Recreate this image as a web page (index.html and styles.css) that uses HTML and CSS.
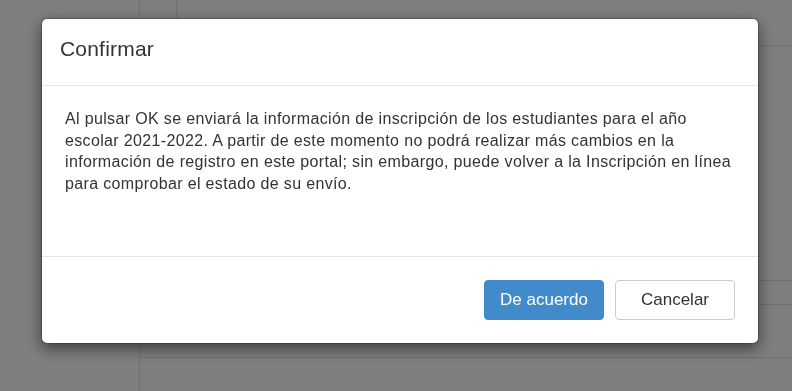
FILE: index.html
```html
<!DOCTYPE html>
<html lang="es">
<head>
<meta charset="utf-8">
<title>Confirmar</title>
<link rel="stylesheet" href="styles.css">
</head>
<body>
<div class="page">
  <aside class="side"></aside>
  <main class="main">
    <div class="topbar"><div class="topcell"></div></div>
    <div class="content"></div>
    <div class="row row-a"></div>
    <div class="row row-b"></div>
  </main>
</div>
<div class="backdrop">
  <div class="modal" role="dialog">
    <div class="modal-header"><h4 class="modal-title">Confirmar</h4></div>
    <div class="modal-body">
      <p>Al pulsar OK se enviará la información de inscripción de los estudiantes para el año escolar 2021-2022. A partir de este momento no podrá realizar más cambios en la información de registro en este portal; sin embargo, puede volver a la Inscripción en línea para comprobar el estado de su envío.</p>
    </div>
    <div class="modal-footer">
      <button class="btn btn-primary" type="button">De acuerdo</button>
      <button class="btn btn-default" type="button">Cancelar</button>
    </div>
  </div>
</div>
</body>
</html>
```

FILE: styles.css
```css
* { box-sizing: border-box; }
html, body { margin: 0; padding: 0; height: 100%; }
body {
  font-family: "Liberation Sans", Arial, sans-serif;
  color: #333;
  background: #fff;
  overflow: hidden;
}
.page { display: flex; height: 391px; }
.side { width: 140px; border-right: 1px solid #e2e2e2; }
.main { flex: 1; display: flex; flex-direction: column; }
.topbar { height: 46px; border-bottom: 1px solid #e2e2e2; }
.topcell { width: 37px; height: 100%; border-right: 1px solid #e2e2e2; }
.content { height: 235px; border-bottom: 1px solid #e2e2e2; }
.row-a { height: 24px; border-bottom: 1px solid #e2e2e2; }
.row-b { height: 53px; border-bottom: 1px solid #e2e2e2; }

.backdrop {
  position: fixed;
  inset: 0;
  background: rgba(0, 0, 0, 0.5);
}
.modal {
  width: 718px;
  margin: 18px 0 0 41px;
  background: #fff;
  border: 1px solid rgba(0, 0, 0, 0.2);
  border-radius: 6px;
  box-shadow: 0 5px 15px rgba(0, 0, 0, 0.5);
  background-clip: padding-box;
}
.modal-header {
  padding: 15px 18px 21px;
  border-bottom: 1px solid #e5e5e5;
}
.modal-title {
  margin: 0;
  font-size: 21px;
  font-weight: normal;
  line-height: 30px;
  letter-spacing: 0.2px;
  color: #333;
}
.modal-body {
  padding: 22px 24px 62px 23px;
}
.modal-body p {
  margin: 0;
  font-size: 16px;
  line-height: 21.5px;
  letter-spacing: 0.35px;
  color: #333;
}
.modal-footer {
  display: flex;
  justify-content: flex-end;
  gap: 11px;
  padding: 23px;
  border-top: 1px solid #e5e5e5;
}
.btn {
  width: 120px;
  height: 40px;
  border-radius: 4px;
  font-family: "Liberation Sans", Arial, sans-serif;
  font-size: 17px;
  border: 1px solid transparent;
  padding: 0;
  cursor: pointer;
}
.btn-primary {
  background: #428bca;
  border-color: #3f86c4;
  color: #fff;
}
.btn-default {
  background: #fff;
  border-color: #ccc;
  color: #333;
}
```
